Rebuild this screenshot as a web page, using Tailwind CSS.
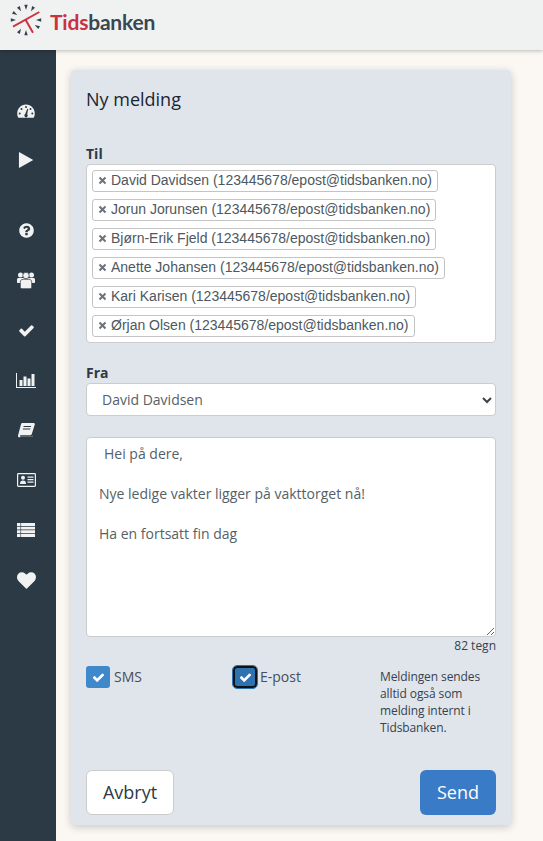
<!DOCTYPE html>
<html lang="en">

<head>
    <meta charset="UTF-8">
    <title>Tidsbanken</title>
    <script src="https://cdn.jsdelivr.net/npm/@tailwindcss/browser@4"></script>
</head>

<body class="w-[543px] h-[841px] overflow-hidden flex flex-col bg-[#fbf7f3] font-['Open_Sans',sans-serif] text-[#36424d]">
    <!-- top bar -->
    <header class="relative z-10 h-[50px] shrink-0 flex items-center pl-[10px] pb-[10px] gap-[8px] bg-[#f0f2f2] shadow-[0_1px_4px_rgba(0,0,0,0.25)]">
        <svg class="w-[32px] h-[32px]" viewBox="0 0 32 32">
            <g fill="#36424d">
                <path d="M14.300 .8h3.400L16 6z" />
                <path d="M14.300 .8h3.400L16 6z" transform="rotate(30 16 16)" />
                <path d="M14.300 .8h3.400L16 6z" transform="rotate(90 16 16)" />
                <path d="M14.300 .8h3.400L16 6z" transform="rotate(120 16 16)" />
                <path d="M14.300 .8h3.400L16 6z" transform="rotate(180 16 16)" />
                <path d="M14.300 .8h3.400L16 6z" transform="rotate(210 16 16)" />
                <path d="M14.300 .8h3.400L16 6z" transform="rotate(270 16 16)" />
                <path d="M14.300 .8h3.400L16 6z" transform="rotate(300 16 16)" />
                <path d="M14.300 .8h3.400L16 6z" transform="rotate(330 16 16)" />
            </g>
            <path d="M3 22.700L29.300 8M15.700 16L23 28.700" stroke="#d0313f" stroke-width="2" fill="none" />
        </svg>
        <span class="font-['Lato',sans-serif] text-[21px] leading-none font-bold tracking-[-0.2px] pt-[2px]"><span class="text-[#c9323f]">Tids</span><span class="text-[#3a4650]">banken</span></span>
    </header>

    <div class="flex flex-1 min-h-0">
        <!-- side menu -->
        <nav class="w-[56px] shrink-0 bg-[#2c3a45] pt-[36px] pr-[4px] flex flex-col items-center text-[#f1f2f2]">
            <div class="h-[50px] flex items-center justify-center">
                <svg class="w-[18px] h-[18px]" viewBox="0 0 18 18">
                    <path fill="currentColor" fill-rule="evenodd" d="M9 2.500C4 2.500 .2 6.500 .2 11.500c0 1.400.3 2.700.8 3.800.1.300.3.400.6.400h14.800c.3 0 .5-.1.600-.4.500-1.100.8-2.400.8-3.800 0-5-3.800-9-8.800-9zM9 4a1 1 0 1 1 0 2 1 1 0 0 1 0-2zM4.500 6a1 1 0 1 1 0 2 1 1 0 0 1 0-2zM13.500 6a1 1 0 1 1 0 2 1 1 0 0 1 0-2zM2.700 10.500a1 1 0 1 1 0 2 1 1 0 0 1 0-2zM15.300 10.500a1 1 0 1 1 0 2 1 1 0 0 1 0-2zM10.300 6.800l.9.200-1 5.300a1.700 1.700 0 1 1-2-.2z" />
                </svg>
            </div>
            <div class="h-[48px] flex items-center justify-center">
                <svg class="w-[18px] h-[18px]" viewBox="0 0 1792 1792">
                    <path fill="currentColor" d="M1576 927l-1328 738q-23 13-39.500 3t-16.500-36v-1472q0-26 16.500-36t39.500 3l1328 738q23 13 23 31t-23 31z" />
                </svg>
            </div>
            <div class="mt-[21px] h-[50px] flex items-center justify-center">
                <svg class="w-[17px] h-[17px]" viewBox="0 0 1792 1792">
                    <path fill="currentColor" d="M1024 1376v-192q0-14-9-23t-23-9h-192q-14 0-23 9t-9 23v192q0 14 9 23t23 9h192q14 0 23-9t9-23zm256-672q0-88-55.500-163t-138.500-116-170-41q-243 0-371 213-15 24 8 42l132 100q7 6 19 6 16 0 25-12 53-68 86-92 34-24 86-24 48 0 85.500 26t37.500 59q0 38-20 61t-68 45q-63 28-115.500 86.500t-52.500 125.500v36q0 14 9 23t23 9h192q14 0 23-9t9-23q0-19 21.500-49.500t54.500-49.500q32-18 49-28.500t46-35 44.500-48 28-60.500 12.500-81zm384 192q0 209-103 385.500t-279.500 279.500-385.500 103-385.500-103-279.500-279.500-103-385.500 103-385.500 279.500-279.500 385.500-103 385.500 103 279.500 279.500 103 385.500z" />
                </svg>
            </div>
            <div class="h-[50px] flex items-center justify-center">
                <svg class="w-[18px] h-[17px]" viewBox="0 0 18 17">
                    <g fill="currentColor">
                        <circle cx="3.500" cy="3" r="2.500" />
                        <circle cx="14.500" cy="3" r="2.500" />
                        <path d="M0 7.500C0 6.500.7 6 1.700 6h14.600c1 0 1.700.5 1.700 1.500V10c0 .6-.4 1-1 1H1c-.6 0-1-.4-1-1z" />
                        <circle cx="9" cy="3.500" r="3.200" stroke="#2c3a45" stroke-width=".7" />
                        <path stroke="#2c3a45" stroke-width=".7" d="M6 7.300h6c1.500 0 2.700 1 2.700 2.700v5c0 1-.7 1.700-1.700 1.700H5c-1 0-1.700-.7-1.700-1.700v-5C3.300 8.300 4.500 7.300 6 7.300z" />
                    </g>
                </svg>
            </div>
            <div class="h-[50px] flex items-center justify-center">
                <svg class="w-[17px] h-[17px]" viewBox="0 0 1792 1792">
                    <path fill="currentColor" d="M1671 566q0-40-28-68l-136-136q-28-28-68-28t-68 28l-656 657-294-295q-28-28-68-28t-68 28l-136 136q-28 28-28 68t28 68l362 362 136 136q28 28 68 28t68-28l136-136 724-724q28-28 28-68z" />
                </svg>
            </div>
            <div class="h-[50px] flex items-center justify-center">
                <svg class="w-[20px] h-[15px]" viewBox="0 0 20 15">
                    <path fill="currentColor" d="M0 0h1v14h19v1H0z" />
                    <path fill="currentColor" d="M3.500 7h3v6h-3zM7.500 3.500h3V13h-3zM11.500 5.500h3V13h-3zM15.500 1h3v12h-3z" />
                </svg>
            </div>
            <div class="h-[50px] flex items-center justify-center">
                <svg class="w-[17px] h-[15px]" viewBox="0 0 17 15">
                    <path fill="currentColor" fill-rule="evenodd" d="M4.500 0h11c1 0 1.500.7 1.200 1.700l-2.900 9.300c-.3.900-1 1.300-2 1.300H2.700c-.7 0-1 .4-.8.900.1.300.5.500 1 .5h10.500c.5 0 .9-.2 1-.6l.3-.8v1c-.2.500-.8.700-1.500.7H2.500C.8 15-.3 13.800.1 12.300L3 1.300C3.200.5 3.800 0 4.500 0zm1.200 3l-.3 1h7.500l.3-1zM5 5.500l-.3 1h7.500l.3-1z" />
                </svg>
            </div>
            <div class="h-[50px] flex items-center justify-center">
                <svg class="w-[19px] h-[14px]" viewBox="0 0 19 14">
                    <rect x=".6" y=".6" width="17.800" height="12.800" rx=".8" fill="none" stroke="currentColor" stroke-width="1.200" />
                    <circle cx="6" cy="4.800" r="2" fill="currentColor" />
                    <path fill="currentColor" d="M3 11c0-2.500 1-3.500 3-3.500S9 8.500 9 11zM10.500 3.500h6v1.200h-6zM10.500 6h6v1.200h-6zM10.500 8.500h6v1.200h-6z" />
                </svg>
            </div>
            <div class="h-[50px] flex items-center justify-center">
                <svg class="w-[18px] h-[14px]" viewBox="0 0 18 14">
                    <path fill="currentColor" d="M0 0h18v3H0zM0 3.700h18v2.900H0zM0 7.300h18v2.900H0zM0 10.900h18V14H0z" />
                    <path fill="#2c3a45" d="M3.500 0h.6v14h-.6z" />
                </svg>
            </div>
            <div class="h-[50px] flex items-center justify-center">
                <svg class="w-[19px] h-[19px]" viewBox="0 0 1792 1792">
                    <path fill="currentColor" d="M896 1664q-26 0-44-18l-624-602q-10-8-27.500-26t-55.500-65.500-68-97.500-53.500-121-23.500-138q0-220 127-344t351-124q62 0 126.500 21.500t120 58 95.500 68.500 76 68q36-36 76-68t95.500-68.500 120-58 126.500-21.500q224 0 351 124t127 344q0 221-229 450l-623 600q-18 18-44 18z" />
                </svg>
            </div>
        </nav>

        <!-- card -->
        <main class="flex-1 pt-[20px] pl-[15px] pr-[32px]">
            <div class="h-[755px] bg-[#e0e5ec] rounded-[4px] shadow-[0_2px_8px_rgba(0,0,0,0.2)] px-[15px] pt-[17px] flex flex-col">
                <h2 class="text-[18px] leading-[25px] text-[#1b2630]">Ny melding</h2>

                <label class="mt-[32px] text-[14px] leading-[20px] font-bold text-[#2c3a45]">Til</label>
                <div class="h-[179px] bg-white border border-[#cccccc] rounded-[4px] px-[5px] pt-[5px] flex flex-col items-start gap-[7px] font-['Liberation_Sans',sans-serif]">
                    <span class="h-[22px] flex items-center px-[5px] pb-[1px] gap-[4px] border border-[#c4c4c4] rounded-[3px] text-[14px] text-[#4d5860] whitespace-nowrap"><svg class="w-[9px] h-[9px]" viewBox="0 0 9 9"><path d="M1.500 1.500l6 6M7.500 1.500l-6 6" stroke="#6b7278" stroke-width="2" /></svg>David Davidsen (123445678/epost@tidsbanken.no)</span>
                    <span class="h-[22px] flex items-center px-[5px] pb-[1px] gap-[4px] border border-[#c4c4c4] rounded-[3px] text-[14px] text-[#4d5860] whitespace-nowrap"><svg class="w-[9px] h-[9px]" viewBox="0 0 9 9"><path d="M1.500 1.500l6 6M7.500 1.500l-6 6" stroke="#6b7278" stroke-width="2" /></svg>Jorun Jorunsen (123445678/epost@tidsbanken.no)</span>
                    <span class="h-[22px] flex items-center px-[5px] pb-[1px] gap-[4px] border border-[#c4c4c4] rounded-[3px] text-[14px] text-[#4d5860] whitespace-nowrap"><svg class="w-[9px] h-[9px]" viewBox="0 0 9 9"><path d="M1.500 1.500l6 6M7.500 1.500l-6 6" stroke="#6b7278" stroke-width="2" /></svg>Bjørn-Erik Fjeld (123445678/epost@tidsbanken.no)</span>
                    <span class="h-[22px] flex items-center px-[5px] pb-[1px] gap-[4px] border border-[#c4c4c4] rounded-[3px] text-[14px] text-[#4d5860] whitespace-nowrap"><svg class="w-[9px] h-[9px]" viewBox="0 0 9 9"><path d="M1.500 1.500l6 6M7.500 1.500l-6 6" stroke="#6b7278" stroke-width="2" /></svg>Anette Johansen (123445678/epost@tidsbanken.no)</span>
                    <span class="h-[22px] flex items-center px-[5px] pb-[1px] gap-[4px] border border-[#c4c4c4] rounded-[3px] text-[14px] text-[#4d5860] whitespace-nowrap"><svg class="w-[9px] h-[9px]" viewBox="0 0 9 9"><path d="M1.500 1.500l6 6M7.500 1.500l-6 6" stroke="#6b7278" stroke-width="2" /></svg>Kari Karisen (123445678/epost@tidsbanken.no)</span>
                    <span class="h-[22px] flex items-center px-[5px] pb-[1px] gap-[4px] border border-[#c4c4c4] rounded-[3px] text-[14px] text-[#4d5860] whitespace-nowrap"><svg class="w-[9px] h-[9px]" viewBox="0 0 9 9"><path d="M1.500 1.500l6 6M7.500 1.500l-6 6" stroke="#6b7278" stroke-width="2" /></svg>Ørjan Olsen (123445678/epost@tidsbanken.no)</span>
                </div>

                <label class="mt-[20px] text-[14px] leading-[20px] font-bold text-[#2c3a45]">Fra</label>
                <div class="relative h-[33px] bg-white border border-[#cccccc] rounded-[4px] flex items-center pl-[15px] text-[14px] text-[#555f67]">
                    David Davidsen
                    <svg class="absolute right-[3px] top-[11px] w-[10px] h-[10px]" viewBox="0 0 10 10"><path d="M1 3l4 4 4-4" stroke="#3a444c" stroke-width="2" fill="none" /></svg>
                </div>

                <textarea class="mt-[21px] h-[200px] shrink-0 bg-white border border-[#cccccc] rounded-[4px] px-[12px] py-[6px] indent-[5px] text-[14px] leading-[20px] text-[#555f67] outline-none">Hei på dere,

Nye ledige vakter ligger på vakttorget nå!

Ha en fortsatt fin dag</textarea>
                <div class="text-right text-[12px] leading-[17px] text-[#36424d]">82 tegn</div>

                <div class="mt-[12px] flex items-start h-[104px]">
                    <div class="w-[147px] flex items-center gap-[4px] text-[14px] leading-[20px] text-[#454f58]">
                        <span class="w-[24px] h-[22px] rounded-[3px] bg-[#3f88cc] flex items-center justify-center">
                            <svg class="w-[13px] h-[13px]" viewBox="0 0 1792 1792"><path fill="#fff" d="M1671 566q0-40-28-68l-136-136q-28-28-68-28t-68 28l-656 657-294-295q-28-28-68-28t-68 28l-136 136q-28 28-28 68t28 68l362 362 136 136q28 28 68 28t68-28l136-136 724-724q28-28 28-68z" /></svg>
                        </span>
                        SMS
                    </div>
                    <div class="w-[147px] flex items-center gap-[3px] text-[14px] leading-[20px] text-[#454f58]">
                        <span class="w-[24px] h-[22px] rounded-[4px] bg-[#2f72b0] border-2 border-[#0d1317] outline outline-1 outline-[#2f72b0] flex items-center justify-center">
                            <svg class="w-[13px] h-[13px]" viewBox="0 0 1792 1792"><path fill="#fff" d="M1671 566q0-40-28-68l-136-136q-28-28-68-28t-68 28l-656 657-294-295q-28-28-68-28t-68 28l-136 136q-28 28-28 68t28 68l362 362 136 136q28 28 68 28t68-28l136-136 724-724q28-28 28-68z" /></svg>
                        </span>
                        E-post
                    </div>
                    <p class="text-[12px] leading-[17px] text-[#36424d] tracking-[-0.1px] mt-[2px]">Meldingen sendes<br>alltid også som<br>melding internt i<br>Tidsbanken.</p>
                </div>

                <div class="flex justify-between">
                    <button class="w-[88px] h-[45px] bg-white border border-[#cccccc] rounded-[6px] text-[18px] text-[#2c3a45]">Avbryt</button>
                    <button class="w-[76px] h-[45px] bg-[#3a7bc8] rounded-[6px] text-[18px] text-white">Send</button>
                </div>
            </div>
        </main>
    </div>
</body>

</html>
